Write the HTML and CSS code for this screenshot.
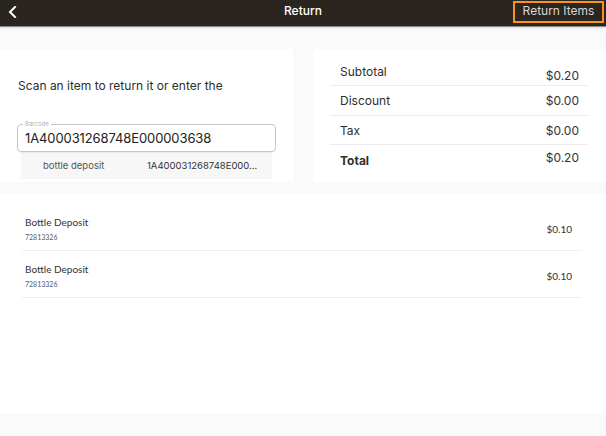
FILE: index.html
```html
<!DOCTYPE html>
<html lang="en">
<head>
<meta charset="utf-8">
<title>Return</title>
<link rel="stylesheet" href="styles.css">
</head>
<body>
<header class="topbar">
  <button class="back" aria-label="Back">
    <svg width="9" height="12" viewBox="0 0 9 12"><path d="M7 1 L2 6 L7 11" fill="none" stroke="#fff" stroke-width="2" stroke-linecap="square"/></svg>
  </button>
  <h1 class="title">Return</h1>
  <div class="actions">
    <button class="return-items">Return Items</button>
  </div>
</header>
<main class="content">
  <section class="top">
    <div class="card scan">
      <p class="prompt">Scan an item to return it or enter the</p>
      <div class="field">
        <span class="field-label">Barcode</span>
        <span class="field-value">1A400031268748E000003638</span>
      </div>
      <div class="suggest">
        <span class="suggest-name">bottle deposit</span>
        <span class="suggest-code">1A400031268748E000…</span>
      </div>
    </div>
    <div class="card summary">
      <div class="sum-row">
        <span class="sum-label">Subtotal</span>
        <span class="sum-value low">$0.20</span>
      </div>
      <div class="sum-row">
        <span class="sum-label">Discount</span>
        <span class="sum-value">$0.00</span>
      </div>
      <div class="sum-row">
        <span class="sum-label">Tax</span>
        <span class="sum-value">$0.00</span>
      </div>
      <div class="sum-row total">
        <span class="sum-label">Total</span>
        <span class="sum-value high">$0.20</span>
      </div>
    </div>
  </section>
  <section class="items">
    <div class="item">
      <div class="item-info">
        <div class="item-name">Bottle Deposit</div>
        <div class="item-code">72813326</div>
      </div>
      <div class="item-price">$0.10</div>
    </div>
    <div class="item">
      <div class="item-info">
        <div class="item-name">Bottle Deposit</div>
        <div class="item-code">72813326</div>
      </div>
      <div class="item-price">$0.10</div>
    </div>
  </section>
</main>
</body>
</html>
```
FILE: styles.css
```css
* { box-sizing: border-box; }

body {
  margin: 0;
  background: #fafafa;
  font-family: "Inter", "Liberation Sans", sans-serif;
  color: #333;
  height: 436px;
  overflow: hidden;
}

.topbar {
  height: 27px;
  background: #2b2520;
  border-bottom: 1px solid #8c8885;
  box-shadow: 0 1px 2px rgba(0,0,0,0.12);
  display: grid;
  grid-template-columns: 1fr auto 1fr;
  align-items: center;
}

.back {
  background: none;
  border: 0;
  padding: 0 0 3px 8px;
  margin: 0;
  justify-self: start;
  display: flex;
  align-items: center;
  height: 26px;
  cursor: pointer;
}

.title {
  margin: 0;
  font-size: 12px;
  font-weight: 500;
  color: #fff;
  line-height: 16px;
  margin-top: -4px;
}

.actions {
  justify-self: end;
  align-self: start;
  padding-top: 1px;
  padding-right: 2px;
}

.return-items {
  display: block;
  width: 91px;
  height: 22px;
  border: 2px solid #f7931e;
  background: transparent;
  color: #d6d6d6;
  font-family: "Inter", "Liberation Sans", sans-serif;
  font-size: 12px;
  line-height: 16px;
  padding: 0 0 2px 0;
  text-align: center;
}

.content {
  padding-top: 22px;
}

.top {
  display: grid;
  grid-template-columns: 293px 293px;
  column-gap: 20px;
}

.card {
  background: #fff;
}

.scan {
  padding: 29px 0 2px 0;
}

.prompt {
  margin: 0 0 30px 18px;
  font-size: 12px;
  line-height: 16px;
  color: #2e2e2e;
}

.field {
  position: relative;
  margin-left: 17px;
  width: 259px;
  height: 28px;
  border: 1px solid #c6c6c6;
  border-radius: 4px;
  display: flex;
  align-items: center;
  padding-left: 7px;
  box-shadow: 0 1px 1px rgba(0,0,0,0.05);
}

.field-label {
  position: absolute;
  top: -5px;
  left: 5px;
  padding: 0 2px;
  background: #fff;
  font-size: 6px;
  line-height: 8px;
  color: #b0b0b0;
}

.field-value {
  font-size: 13px;
  line-height: 16px;
  color: #222;
  letter-spacing: -0.1px;
}

.suggest {
  margin-left: 21px;
  width: 251px;
  height: 27px;
  background: #f7f7f7;
  display: grid;
  grid-template-columns: 104px 1fr;
  align-items: center;
  padding-left: 22px;
  font-size: 9.5px;
  color: #555;
}

.suggest-code {
  color: #333;
}

.summary {
  padding: 7.5px 18px 7px 17px;
}

.sum-row {
  height: 29.5px;
  display: flex;
  align-items: center;
  justify-content: space-between;
  border-bottom: 1px solid #ececec;
  font-size: 12px;
  line-height: 16px;
  padding: 2px 9px 0 10px;
}

.sum-row.total {
  border-bottom: 0;
  font-weight: 700;
}

.sum-row.total .sum-value {
  font-weight: 400;
}

.sum-label {
  color: #2e2e2e;
}

.sum-value {
  color: #333;
}

.sum-value.low {
  margin-top: 8px;
}

.sum-value.high {
  margin-bottom: 6px;
}

.items {
  margin-top: 12.5px;
  background: #fff;
  height: 219px;
  padding: 10px 24px 0 22px;
  font-family: "Lato", "Liberation Sans", sans-serif;
}

.item {
  display: flex;
  align-items: center;
  justify-content: space-between;
  padding: 11px 10px 8px 3px;
  border-bottom: 1px solid #efefef;
}

.item-name {
  font-size: 10px;
  line-height: 14px;
  color: #333;
}

.item-code {
  margin-top: 4px;
  font-size: 7px;
  line-height: 9px;
  color: #5a5e64;
}

.item-price {
  font-size: 10px;
  line-height: 14px;
  color: #333;
  margin-top: 1px;
}
```
